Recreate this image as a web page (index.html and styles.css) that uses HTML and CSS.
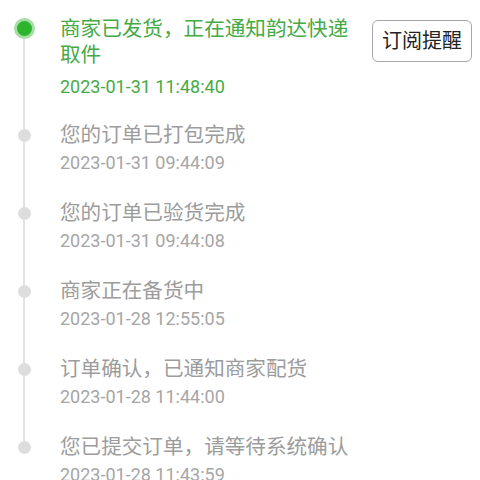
FILE: index.html
```html
<!DOCTYPE html>
<html lang="zh-CN">
<head>
<meta charset="utf-8">
<title>物流进度</title>
<link rel="stylesheet" href="styles.css">
</head>
<body>
<div class="timeline">
  <div class="item active">
    <div class="rail"><span class="seg-top"></span><span class="dot"></span><span class="seg-bottom"></span></div>
    <div class="content">
      <div class="title">商家已发货，正在通知韵达快递取件</div>
      <div class="date">2023-01-31 11:48:40</div>
    </div>
    <button class="subscribe">订阅提醒</button>
  </div>
  <div class="item">
    <div class="rail"><span class="seg-top"></span><span class="dot"></span><span class="seg-bottom"></span></div>
    <div class="content">
      <div class="title">您的订单已打包完成</div>
      <div class="date">2023-01-31 09:44:09</div>
    </div>
  </div>
  <div class="item">
    <div class="rail"><span class="seg-top"></span><span class="dot"></span><span class="seg-bottom"></span></div>
    <div class="content">
      <div class="title">您的订单已验货完成</div>
      <div class="date">2023-01-31 09:44:08</div>
    </div>
  </div>
  <div class="item">
    <div class="rail"><span class="seg-top"></span><span class="dot"></span><span class="seg-bottom"></span></div>
    <div class="content">
      <div class="title">商家正在备货中</div>
      <div class="date">2023-01-28 12:55:05</div>
    </div>
  </div>
  <div class="item">
    <div class="rail"><span class="seg-top"></span><span class="dot"></span><span class="seg-bottom"></span></div>
    <div class="content">
      <div class="title">订单确认，已通知商家配货</div>
      <div class="date">2023-01-28 11:44:00</div>
    </div>
  </div>
  <div class="item last">
    <div class="rail"><span class="seg-top"></span><span class="dot"></span><span class="seg-bottom"></span></div>
    <div class="content">
      <div class="title">您已提交订单，请等待系统确认</div>
      <div class="date">2023-01-28 11:43:59</div>
    </div>
  </div>
</div>
</body>
</html>
```

FILE: styles.css
```css
html, body {
  margin: 0;
  padding: 0;
  background: #ffffff;
  width: 480px;
  height: 480px;
  overflow: hidden;
}

body {
  font-family: Roboto, "Noto Sans CJK SC", "Noto Sans", sans-serif;
}

.timeline {
  padding-top: 16px;
  padding-right: 8px;
}

.item {
  display: grid;
  grid-template-columns: 48px 1fr auto;
  column-gap: 12px;
  align-items: start;
}

.rail {
  display: flex;
  flex-direction: column;
  align-items: center;
  align-self: stretch;
}

.seg-top {
  width: 2px;
  height: 8px;
  background: #e2e2e2;
  flex: none;
}

.seg-bottom {
  width: 2px;
  flex: 1;
  background: #e2e2e2;
}

.dot {
  width: 13px;
  height: 13px;
  border-radius: 50%;
  background: #dddddd;
  flex: none;
}

.item.active .seg-top {
  height: 2px;
  background: transparent;
}

.item.active .dot {
  width: 15px;
  height: 15px;
  background: #2db42d;
  border: 3px solid #a6dea6;
}

.item.last .seg-bottom {
  background: transparent;
}

.content {
  padding-bottom: 22px;
  min-width: 0;
}

.title {
  font-size: 20.6px;
  line-height: 28px;
  color: #9c9c9c;
}

.date {
  font-size: 18px;
  line-height: 28px;
  color: #a6a6a6;
}

.item.active .title {
  color: #45aa45;
  line-height: 26px;
}

.item.active .date {
  color: #45aa45;
  margin-top: 5px;
}

.item.active .content {
  padding-bottom: 20px;
}

.subscribe {
  margin-top: 4px;
  height: 42px;
  padding: 0 9px;
  border: 1px solid #a6a6a6;
  border-radius: 6px;
  background: #ffffff;
  color: #222222;
  font-family: Roboto, "Noto Sans CJK SC", sans-serif;
  font-size: 20px;
  line-height: 40px;
  margin-left: 1px;
}
```
